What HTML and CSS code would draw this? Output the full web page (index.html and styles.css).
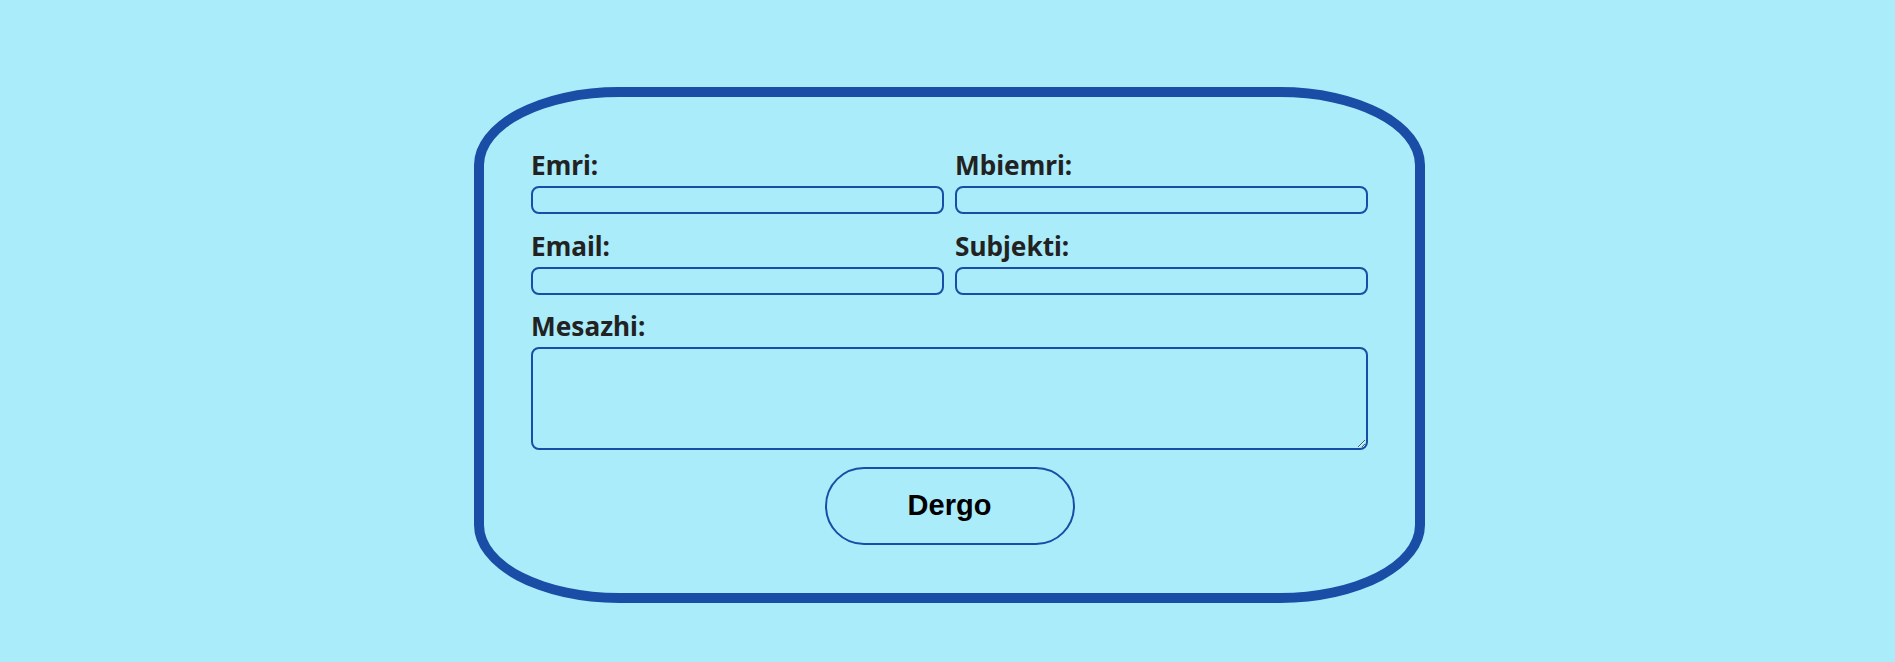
FILE: index.html
```html
<!DOCTYPE html>
<html lang="sq">
<head>
<meta charset="utf-8">
<title>Kontakt</title>
<link rel="stylesheet" href="styles.css">
</head>
<body>
<main class="page">
  <form class="card">
    <div class="grid">
      <div class="field">
        <label class="label" for="emri">Emri:</label>
        <input class="input" id="emri" type="text">
      </div>
      <div class="field">
        <label class="label" for="mbiemri">Mbiemri:</label>
        <input class="input" id="mbiemri" type="text">
      </div>
      <div class="field">
        <label class="label" for="email">Email:</label>
        <input class="input" id="email" type="email">
      </div>
      <div class="field">
        <label class="label" for="subjekti">Subjekti:</label>
        <input class="input" id="subjekti" type="text">
      </div>
      <div class="field wide">
        <label class="label" for="mesazhi">Mesazhi:</label>
        <textarea class="textarea" id="mesazhi"></textarea>
      </div>
    </div>
    <div class="actions">
      <button class="button" type="button">Dergo</button>
    </div>
  </form>
</main>
</body>
</html>
```
FILE: styles.css
```css
html, body {
  margin: 0;
  padding: 0;
}
body {
  background: #aaecfa;
  font-family: "Noto Sans", "Open Sans", sans-serif;
  height: 662px;
  overflow: hidden;
}
.page {
  padding-top: 87px;
}
.card {
  box-sizing: border-box;
  width: 951px;
  margin-left: 474px;
  border: 10px solid #1a4da6;
  border-radius: 145px / 78px;
  padding: 53px 47px 48px 47px;
}
.grid {
  display: grid;
  grid-template-columns: 1fr 1fr;
  column-gap: 11px;
  row-gap: 16.5px;
}
.field {
  display: flex;
  flex-direction: column;
  gap: 6px;
}
.wide {
  grid-column: 1 / span 2;
}
.label {
  font-family: "Noto Sans", sans-serif;
  font-weight: 700;
  font-size: 26.2px;
  line-height: 30px;
  color: #222222;
}
.input, .textarea {
  box-sizing: border-box;
  display: block;
  width: 100%;
  margin: 0;
  background: transparent;
  border: 2px solid #1a4da6;
  border-radius: 8px;
  outline: none;
}
.input {
  height: 28px;
}
.textarea {
  height: 103px;
  resize: both;
}
.actions {
  display: flex;
  justify-content: center;
  margin-top: 16.5px;
}
.button {
  box-sizing: border-box;
  width: 250px;
  height: 78px;
  background: transparent;
  border: 2px solid #1a4da6;
  border-radius: 40px;
  font-family: "Liberation Sans", Arial, sans-serif;
  font-weight: 700;
  font-size: 29px;
  color: #000000;
  padding: 0;
}
```
